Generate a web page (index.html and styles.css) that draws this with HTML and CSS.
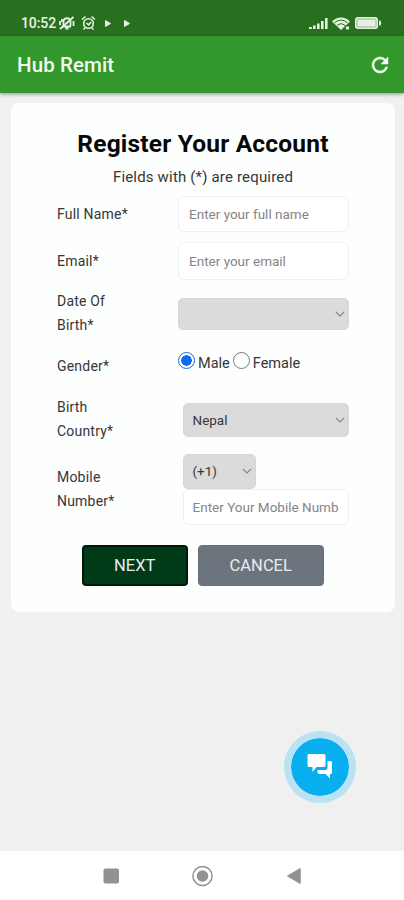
FILE: index.html
```
<!DOCTYPE html>
<html lang="en">
<head>
<meta charset="utf-8">
<title>Hub Remit</title>
<link rel="stylesheet" href="styles.css">
</head>
<body>
<div class="status">
  <span class="time">10:52</span>
  <svg class="status-left" width="80" height="18" viewBox="0 0 80 18" fill="none" stroke="#e4f1e1" stroke-width="1.6">
    <path d="M4 12.500h9M5.500 12V8c0-5 7-5 7 0v4M7.500 14.500h3" stroke-width="1.800"/>
    <path d="M2 15L15.500 3M2 7v4M4 5v3M15.500 7v5"  stroke-width="1.800"/>
    <circle cx="30.500" cy="9.500" r="4.800"/>
    <path d="M24 5.500l3.500-3M37 5.500l-3.500-3M28.500 9l2 1.800 2.700-2.600M27 14l-1.500 1.500M34 14l1.500 1.500"/>
    <path d="M47.500 6.500v6l5-3zM66.500 6.500v6l5-3z" fill="#e4f1e1" stroke-width="1"/>
  </svg>
  <svg class="status-right" width="74" height="16" viewBox="0 0 74 16">
    <g fill="#e4f1e1">
      <path d="M0 12h2.800v2H0zM4 10.500h2.600V14H4zM8 8.500h2.600V14H8zM12 6h2.600v8H12zM16 3h2.600v11H16z"/>
      <path d="M23 6.500C28 1 36 1 41 6.500L32 15z"/>
      <rect x="46" y="2" width="23" height="12" rx="3"/>
      <path d="M70 5.500h1.500q1.500 2.500 0 5H70z"/>
    </g>
    <g fill="none" stroke="#28701f" stroke-width="1">
      <path d="M25.500 7.800q6.500-5.500 13 0M28 10.500q4-3.500 8 0"/>
      <rect x="48" y="4" width="19" height="8" rx="1.500" stroke="#8eb78a"/>
    </g>
    <path d="M36 10.500h6V16h-6z" fill="#28701f"/>
    <circle cx="38.500" cy="13" r="1.800" fill="#e4f1e1"/>
  </svg>
</div>
<header class="appbar">
  <h1>Hub Remit</h1>
  <svg width="24" height="24" viewBox="0 0 24 24" fill="#f1faef"><path stroke="#f1faef" stroke-width=".5" d="M17.650 6.350A7.950 7.950 0 0 0 12 4a8 8 0 1 0 7.730 10h-2.080A6 6 0 1 1 12 6c1.660 0 3.140.690 4.220 1.780L13 11h7V4z"/></svg>
</header>
<main>
  <form class="card">
    <h2>Register Your Account</h2>
    <p class="hint">Fields with (*) are required</p>
    <div class="row name-row">
      <label class="label">Full Name*</label>
      <input class="field" type="text" placeholder="Enter your full name">
    </div>
    <div class="row email-row">
      <label class="label">Email*</label>
      <input class="field email" type="text" placeholder="Enter your email">
    </div>
    <div class="row tall-row">
      <label class="label">Date Of<br>Birth*</label>
      <div class="select date"><span></span><svg width="10" height="6" viewBox="0 0 10 6"><path d="M.8.800L5 5 9.200.800"/></svg></div>
    </div>
    <div class="row gender-row">
      <label class="label">Gender*</label>
      <div class="radios">
        <span class="radio checked"></span><span class="choice">Male</span>
        <span class="radio"></span><span class="choice">Female</span>
      </div>
    </div>
    <div class="row tall-row">
      <label class="label">Birth<br>Country*</label>
      <div class="select country"><span>Nepal</span><svg width="10" height="6" viewBox="0 0 10 6"><path d="M.8.800L5 5 9.200.800"/></svg></div>
    </div>
    <div class="row mobile-row">
      <label class="label">Mobile<br>Number*</label>
      <div class="phone">
        <div class="select code"><span>(+1)</span><svg width="10" height="6" viewBox="0 0 10 6"><path d="M.8.800L5 5 9.200.800"/></svg></div>
        <input class="field" type="text" placeholder="Enter Your Mobile Numb">
      </div>
    </div>
    <div class="actions">
      <button class="btn next" type="button">NEXT</button>
      <button class="btn cancel" type="button">CANCEL</button>
    </div>
  </form>
</main>
<div class="chat">
  <svg width="28" height="28" viewBox="0 0 28 28" fill="#fff">
    <path d="M3 1h15q1.500 0 1.500 1.500v10q0 1.500-1.500 1.500H10.500L6.500 19v-5H3q-1.500 0-1.500-1.500v-10Q1.500 1 3 1z"/>
    <path d="M21.500 8h3q1.500 0 1.500 1.500v10q0 1.500-1.500 1.500h-.500v4.500L19.500 21H13q-1.500 0-1.500-1.500V17h8q2 0 2-2z"/>
  </svg>
</div>
<nav class="navbar">
  <svg width="404" height="49" viewBox="0 0 404 49" fill="#929292">
    <rect x="103.500" y="17.500" width="15.500" height="15" rx="2"/>
    <circle cx="202.500" cy="25" r="9.600" fill="none" stroke="#929292" stroke-width="1.500"/>
    <circle cx="202.500" cy="25" r="5.800"/>
    <path d="M287.500 25l12.700-7.500v15z" stroke="#929292" stroke-linejoin="round"/>
  </svg>
</nav>
</body>
</html>
```
FILE: styles.css
```
* { box-sizing: border-box; }
body {
  margin: 0;
  height: 900px;
  display: flex;
  flex-direction: column;
  overflow: hidden;
  background: #f0f0f0;
  font-family: Roboto, sans-serif;
  color: #363636;
}
.status {
  height: 36px;
  flex: none;
  display: flex;
  align-items: center;
  padding: 10px 21px 0;
  background: #28701f;
  color: #e8f3e6;
}
.time { width: 37px; font-size: 14px; font-weight: 500; letter-spacing: -.1px; }
.status-right { margin-left: auto; }
.appbar {
  height: 57px;
  flex: none;
  display: flex;
  align-items: center;
  justify-content: space-between;
  padding: 0 12px 0 17px;
  background: #33982b;
  box-shadow: 0 1px 4px rgba(0, 0, 0, .4);
}
.appbar h1 { margin: 0; font-size: 20.500px; font-weight: 500; color: #f1faef; letter-spacing: .1px; }
main { flex: 1; padding: 10px 9px 0 11px; }
.card { height: 509px; border-radius: 8px; background: #fdfefe; padding-top: 25px; }
h2 {
  margin: 0;
  height: 31px;
  line-height: 32px;
  text-align: center;
  font-size: 24.500px;
  font-weight: 700;
  letter-spacing: .2px;
  color: #080808;
}
.hint { margin: 5px 0 0; height: 26px; line-height: 26px; font-size: 15px; letter-spacing: .17px; text-align: center; }
.row {
  display: grid;
  grid-template-columns: 121px 170.500px;
  align-items: center;
  padding-left: 46px;
}
.name-row { height: 48px; }
.email-row { height: 46px; }
.tall-row { height: 58px; }
.gender-row { height: 48px; }
.mobile-row { height: 82px; }
.label { font-size: 14px; line-height: 24.500px; letter-spacing: .2px; }
.field {
  width: 100%;
  height: 36px;
  padding: 0 9px 0 10px;
  border: 1px solid #efefef;
  border-radius: 6px;
  background: #fff;
  font: 13.500px Roboto, sans-serif;
  letter-spacing: 0;
}
.field::placeholder { color: #858585; }
.email { height: 38px; }
.select {
  display: flex;
  align-items: center;
  justify-content: space-between;
  padding: 0 3px 0 9px;
  border: 1px solid #d6d6d6;
  border-radius: 5px;
  background: #dbdbdb;
  font-size: 13.500px;
}
.select path { fill: none; stroke: #808080; stroke-width: 1.100; }
.date { height: 32px; margin-top: 1px; }
.country { height: 34px; margin: 1px 0 0 4.500px; }
.phone { margin-left: 4.500px; }
.phone .field { padding: 0 9px; }
.code { width: 73px; height: 35px; }
.radios { display: flex; align-items: center; gap: 3px; font-size: 14.500px; height: 18px; margin-bottom: 11px; }
.choice { padding-top: 6px; }
.radio { width: 17px; height: 17px; border: 1px solid #777; border-radius: 50%; }
.checked { border-color: #0b6bf2; background: radial-gradient(circle, #0b6bf2 5px, #fff 5.500px); }
.actions { display: flex; gap: 10px; margin: 15px 0 0 71px; }
.btn {
  height: 41px;
  padding: 0;
  border: 1px solid #68717a;
  border-radius: 4px;
  background: #6c757d;
  color: #e9ecee;
  font: 16.500px Roboto, sans-serif;
}
.next { width: 105.500px; border: 2px solid #001a08; background: #003a18; }
.cancel { width: 126.500px; }
.chat {
  position: absolute;
  left: 284px;
  top: 731px;
  width: 72px;
  height: 72px;
  display: flex;
  align-items: center;
  justify-content: center;
  border: 7px solid #b9e2f3;
  border-radius: 50%;
  background: #09aeee;
  background-clip: padding-box;
}
.navbar { height: 49px; flex: none; background: #fff; }
.navbar svg { display: block; }
```
